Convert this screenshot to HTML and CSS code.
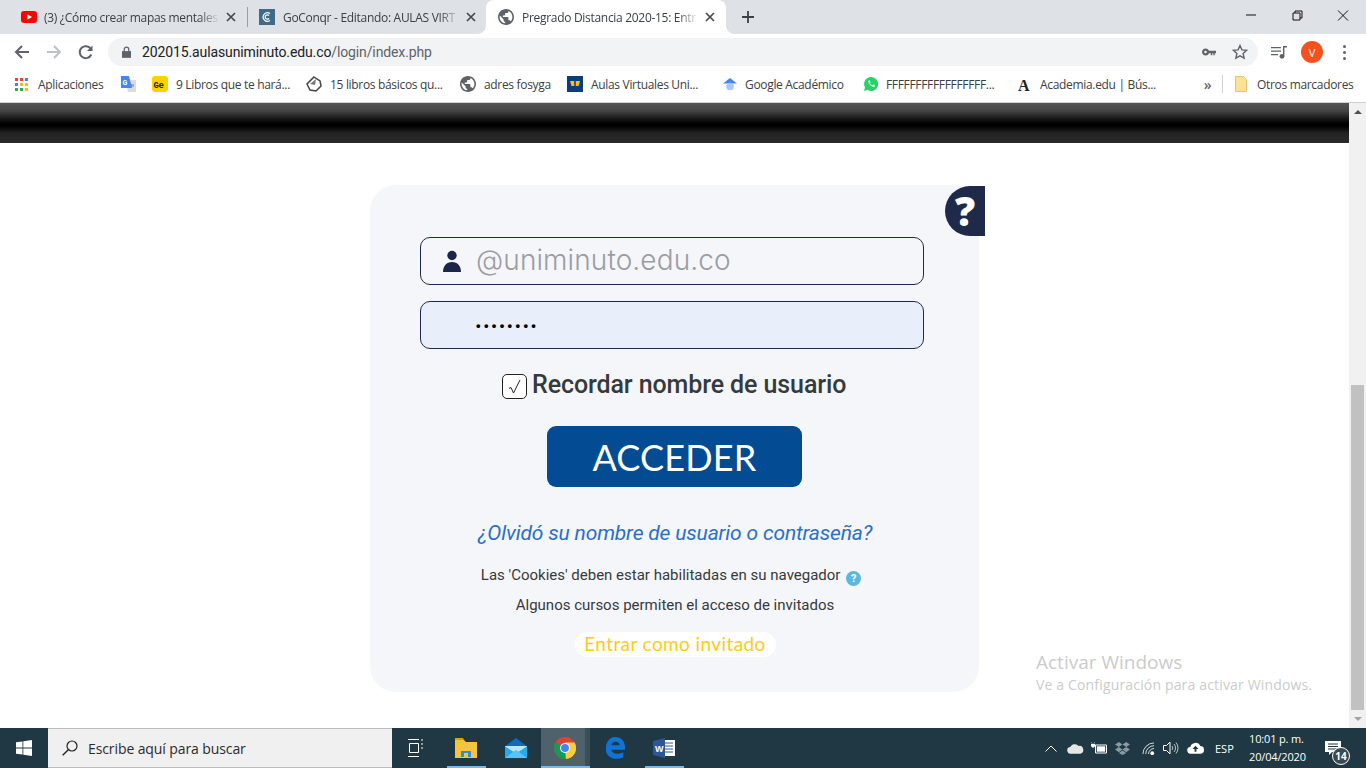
FILE: index.html
```html
<!DOCTYPE html>
<html lang="es">
<head>
<meta charset="utf-8">
<title>Pregrado Distancia 2020-15: Entrar al sitio</title>
<link rel="stylesheet" href="styles.css">
</head>
<body>
<header class="tabstrip">
  <div class="tab tab-yt">
    <svg class="fav" viewBox="0 0 16 16"><rect y="2" width="16" height="12" rx="3" fill="#f00"/><path d="M6.300 5.200v5.600L11 8z" fill="#fff"/></svg>
    <span class="tab-title">(3) ¿Cómo crear mapas mentales</span>
    <svg class="tab-x" viewBox="0 0 10 10"><path d="M1 1l8 8M9 1l-8 8"/></svg>
  </div>
  <i class="tab-sep"></i>
  <div class="tab tab-go">
    <svg class="fav" viewBox="0 0 16 16"><rect width="16" height="16" fill="#3f6b87"/><path d="M11 4.500a4.300 4.300 0 1 0 0 7M10 6.500a2.200 2.200 0 1 0 0 3" fill="none" stroke="#fff" stroke-width="1.200"/></svg>
    <span class="tab-title">GoConqr - Editando: AULAS VIRT</span>
    <svg class="tab-x" viewBox="0 0 10 10"><path d="M1 1l8 8M9 1l-8 8"/></svg>
  </div>
  <div class="tab tab-active">
    <svg class="fav" viewBox="2 2 20 20"><path fill="#5f6368" d="M12 2C6.480 2 2 6.480 2 12s4.480 10 10 10 10-4.480 10-10S17.520 2 12 2zm-1 17.930c-3.950-.490-7-3.850-7-7.930 0-.620.080-1.210.210-1.790L9 15v1c0 1.100.900 2 2 2v1.930zm6.900-2.540c-.260-.810-1-1.390-1.900-1.390h-1v-3c0-.550-.450-1-1-1H8v-2h2c.550 0 1-.450 1-1V7h2c1.100 0 2-.900 2-2v-.410c2.930 1.190 5 4.060 5 7.410 0 2.080-.800 3.970-2.100 5.390z"/></svg>
    <span class="tab-title">Pregrado Distancia 2020-15: Entr</span>
    <svg class="tab-x" viewBox="0 0 10 10"><path d="M1 1l8 8M9 1l-8 8"/></svg>
  </div>
  <svg class="new-tab" viewBox="0 0 12 12"><path d="M6 0v12M0 6h12"/></svg>
  <div class="win-controls">
    <svg viewBox="0 0 46 34"><path d="M18 15h10"/></svg>
    <svg viewBox="0 0 46 34"><path d="M19 13h7v7h-7zM21 13v-2h7v7h-2"/></svg>
    <svg viewBox="0 0 46 34"><path d="M18 10.500l10 10M28 10.500l-10 10"/></svg>
  </div>
</header>

<nav class="toolbar">
  <svg class="nav-btn" viewBox="0 0 16 16"><path d="M15 8H2M8 2L2 8l6 6" fill="none" stroke="#5f6368" stroke-width="2"/></svg>
  <svg class="nav-btn" viewBox="0 0 16 16"><path d="M1 8h13M8 2l6 6-6 6" fill="none" stroke="#bfc1c4" stroke-width="2"/></svg>
  <svg class="nav-btn" viewBox="0 0 16 16"><path d="M13.300 10.500a6 6 0 1 1-.4-5.500" fill="none" stroke="#5f6368" stroke-width="2"/><path d="M14.500 1.500v5.500H9z" fill="#5f6368"/></svg>
  <div class="omnibox">
    <svg class="lock" viewBox="0 0 10 13"><path d="M0 5.500h10V13H0z" fill="#5f6368"/><path d="M2.500 6V3.500a2.500 2.500 0 0 1 5 0V6" fill="none" stroke="#5f6368" stroke-width="1.400"/></svg>
    <span class="url"><b>202015.aulasuniminuto.edu.co</b>/login/index.php</span>
    <svg class="key" viewBox="0 0 14 8"><circle cx="3.500" cy="4" r="2.400" fill="none" stroke="#5f6368" stroke-width="2.200"/><path d="M6 2.800h8v2.400h-1.200v2h-1.500v-2h-1v2H8.800v-2H6z" fill="#5f6368"/></svg>
    <svg class="star" viewBox="0 0 16 16"><path d="M8 1.500l1.900 4.400 4.800.4-3.600 3.200 1 4.700L8 11.800l-4.100 2.400 1-4.700-3.600-3.200 4.800-.4z" fill="none" stroke="#5f6368" stroke-width="1.400"/></svg>
  </div>
  <svg class="media" viewBox="0 0 16 14"><path d="M0 2h10v1.300H0zM0 5.500h10v1.300H0zM0 9h7v1.300H0zM12 1h4v1.500h-2.600V11h-1.400z" fill="#5f6368"/><circle cx="11" cy="11.300" r="2.400" fill="#5f6368"/></svg>
  <div class="avatar">V</div>
  <div class="menu-dots"><i></i><i></i><i></i></div>
</nav>

<nav class="bookmarks">
  <div class="bm bm-apps">
    <svg class="apps" viewBox="0 0 13 13"><path fill="#ea4335" d="M0 0h3v3H0zM5 0h3v3H5z"/><path fill="#4285f4" d="M10 0h3v3h-3zM0 5h3v3H0z"/><path fill="#fbbc05" d="M5 5h3v3H5zM10 5h3v3h-3zM10 10h3v3h-3z"/><path fill="#34a853" d="M0 10h3v3H0zM5 10h3v3H5z"/></svg>
    <span>Aplicaciones</span>
  </div>
  <div class="bm bm-trans">
    <svg class="fav" viewBox="0 0 16 16"><path d="M5 4h11v12H8z" fill="#dadce0"/><path d="M1 0h8l3 12H1z" fill="#4285f4"/><text x="2.500" y="9" font-size="7" font-family="Roboto" font-weight="700" fill="#fff">G</text><path d="M11 8l1 1.500 1.500-1.500M10 10h4" stroke="#80868b" fill="none"/></svg>
  </div>
  <div class="bm bm-ge">
    <svg class="fav" viewBox="0 0 16 16"><rect width="16" height="16" rx="3" fill="#ffd000"/><text x="1.500" y="11.500" font-size="9" font-family="Liberation Mono" font-weight="700" fill="#222">Ge</text></svg>
    <span>9 Libros que te hará...</span>
  </div>
  <div class="bm bm-quince">
    <svg class="fav" viewBox="0 0 16 16"><path d="M8 1l6 4 1 5-5 5-6-1-3-6z" fill="#fff" stroke="#444" stroke-width="1.500"/><path d="M4 8l6-5-1 6z" fill="#777"/></svg>
    <span>15 libros básicos qu...</span>
  </div>
  <div class="bm bm-adres">
    <svg class="fav" viewBox="2 2 20 20"><path fill="#5f6368" d="M12 2C6.480 2 2 6.480 2 12s4.480 10 10 10 10-4.480 10-10S17.520 2 12 2zm-1 17.930c-3.950-.490-7-3.850-7-7.930 0-.620.080-1.210.210-1.790L9 15v1c0 1.100.900 2 2 2v1.930zm6.900-2.540c-.260-.810-1-1.390-1.900-1.390h-1v-3c0-.550-.450-1-1-1H8v-2h2c.550 0 1-.450 1-1V7h2c1.100 0 2-.900 2-2v-.410c2.930 1.190 5 4.060 5 7.410 0 2.080-.800 3.970-2.100 5.390z"/></svg>
    <span>adres fosyga</span>
  </div>
  <div class="bm bm-aulas">
    <svg class="fav" viewBox="0 0 16 16"><rect width="16" height="16" fill="#0a3d7c"/><path d="M3 5h10l-1.500 5h-7z" fill="#f7c500"/><path d="M8 1v14" stroke="#0a3d7c" stroke-width="1.500"/></svg>
    <span>Aulas Virtuales Uni...</span>
  </div>
  <div class="bm bm-scholar">
    <svg class="fav" viewBox="0 0 16 16"><path d="M8 2L1 7.500h14z" fill="#4285f4"/><circle cx="8" cy="10.500" r="3.800" fill="#a8c7fa"/></svg>
    <span>Google Académico</span>
  </div>
  <div class="bm bm-wa">
    <svg class="fav" viewBox="0 0 16 16"><path d="M8 1a7 7 0 0 0-6 10.500L1 15l3.600-1A7 7 0 1 0 8 1z" fill="#25d366"/><path d="M5.500 4.500l1.200-.2.8 2-.7.9c.5 1 1.300 1.800 2.400 2.300l.9-.9 1.900.9-.3 1.300c-3 .6-7-3.300-6.200-6.300z" fill="#fff"/></svg>
    <span>FFFFFFFFFFFFFFFFF...</span>
  </div>
  <div class="bm bm-acad">
    <svg class="fav" viewBox="0 0 16 16"><text x="1" y="14.500" font-size="16" font-family="Liberation Serif" font-weight="700" fill="#222">A</text></svg>
    <span>Academia.edu | Bús...</span>
  </div>
  <span class="bm-more">»</span>
  <i class="bm-sep"></i>
  <div class="bm bm-other">
    <svg class="folder" viewBox="0 0 12 16"><path d="M.5.500h8l3 3v12H.500z" fill="#fde293" stroke="#e8c468"/></svg>
    <span>Otros marcadores</span>
  </div>
</nav>

<div class="viewport">
  <main class="page">
    <div class="hero-band"></div>
    <section class="card">
      <a class="help-tab">?</a>
      <div class="field">
        <svg class="user-ico" viewBox="0 0 20 22"><circle cx="10" cy="5.500" r="4.700" fill="#1c2747"/><path d="M1 22c0-6 3.500-10 9-10s9 4 9 10z" fill="#1c2747"/></svg>
        <span class="placeholder">@uniminuto.edu.co</span>
      </div>
      <div class="field field-pass"><span class="dots">••••••••</span></div>
      <label class="remember">
        <span class="checkbox"><svg viewBox="0 0 13 15"><path d="M1 9.500l2-1 2.500 5.500L12 1" fill="none" stroke="#222" stroke-width="1"/></svg></span>
        <span class="remember-text">Recordar nombre de usuario</span>
      </label>
      <button class="submit">ACCEDER</button>
      <a class="forgot">¿Olvidó su nombre de usuario o contraseña?</a>
      <p class="note note-cookies">Las 'Cookies' deben estar habilitadas en su navegador <span class="q-ico">?</span></p>
      <p class="note note-guest">Algunos cursos permiten el acceso de invitados</p>
      <a class="guest">Entrar como invitado</a>
    </section>
    <div class="watermark">
      <div class="wm-title">Activar Windows</div>
      <div class="wm-sub">Ve a Configuración para activar Windows.</div>
    </div>
  </main>
  <div class="scrollbar">
    <i class="arrow-up"></i>
    <div class="thumb"></div>
    <i class="arrow-down"></i>
  </div>
</div>

<footer class="taskbar">
  <div class="start">
    <svg viewBox="0 0 16 16"><path fill="#fff" d="M0 2.300l6.500-.9v6.200H0zM7.300 1.300L16 0v7.600H7.300zM0 8.400h6.500v6.200L0 13.700zM7.300 8.400H16V16l-8.700-1.300z"/></svg>
  </div>
  <div class="search">
    <svg viewBox="0 0 16 16"><circle cx="10" cy="6" r="5" fill="none" stroke="#222" stroke-width="1.200"/><path d="M6.300 9.700L.7 15.300" stroke="#222" stroke-width="1.400"/></svg>
    <span>Escribe aquí para buscar</span>
  </div>
  <div class="task task-view">
    <svg viewBox="0 0 16 18"><path d="M1 .5h11M1 17.500h11M14 1h2M14 5h2M14 9h2M2.500 4.500h9v9h-9z" stroke="#fff" fill="none"/></svg>
  </div>
  <div class="task open">
    <svg viewBox="0 0 22 20"><path d="M0 2h9l2 2h11v16H0z" fill="#f8c53a"/><path d="M0 0h8l1 2H0z" fill="#d9a01e"/><path d="M6 13h10v6H6z" fill="#2d8fd5"/><path d="M9 15h4v4H9z" fill="#f8c53a"/></svg>
  </div>
  <div class="task">
    <svg viewBox="0 0 24 22"><path d="M12 0l12 9v13H0V9z" fill="#0f6cbd"/><path d="M0 9h24v13H0z" fill="#29a8ea"/><path d="M0 9l12 8 12-8v-.2H0z" fill="#bfe6fa"/><path d="M0 22l12-9 12 9z" fill="#5cc3f0"/></svg>
  </div>
  <div class="task active">
    <svg viewBox="0 0 24 24"><circle cx="12" cy="12" r="12" fill="#db4437"/><path d="M12 12L2 18a12 12 0 0 1-.5-12z" fill="#0f9d58"/><path d="M2 18a12 12 0 0 0 10 6 12 12 0 0 0 10.400-6L12 12z" fill="#0f9d58"/><path d="M12 6h10.500A12 12 0 0 1 13 24l-1-12z" fill="#ffcd40"/><circle cx="12" cy="12" r="5.400" fill="#fff"/><circle cx="12" cy="12" r="4.300" fill="#4285f4"/></svg>
  </div>
  <div class="task">
    <svg viewBox="0 0 22 24"><path d="M11 0c7 0 11 5 11 12v2H7c.5 4 6 6 13 2.500v5.500C12 26 1 23 1 13 1 6 5 0 11 0zm5 9c0-5-8-5-9 0z" fill="#0f74d6"/></svg>
  </div>
  <div class="task open">
    <svg viewBox="0 0 22 20"><path d="M8 2h14v16H8z" fill="#fff"/><path d="M10 5h10M10 8h10M10 11h10M10 14h10" stroke="#2b579a"/><path d="M0 3l12-3v20L0 17z" fill="#2b579a"/><text x="2" y="13.500" font-size="9" font-family="Liberation Sans" font-weight="700" fill="#fff">W</text></svg>
  </div>
  <div class="tray">
    <svg class="t-up" viewBox="0 0 12 7"><path d="M.5 6.500L6 1l5.500 5.500" fill="none" stroke="#fff"/></svg>
    <svg class="t-cloud" viewBox="0 0 18 11"><path d="M4 11a3.500 3.500 0 0 1-.5-7A5 5 0 0 1 12 2.800 4 4 0 0 1 14 11z" fill="#e6e6e6"/></svg>
    <svg class="t-batt" viewBox="0 0 16 12"><path d="M4.500 3h11v8h-11z" fill="none" stroke="#fff"/><path d="M6 4.500h8v5H6zM0 .5h1M3 .5h1M0 2h4v2L2.500 5.500H1.500L0 4z" fill="#fff" stroke="#fff" stroke-width=".4"/></svg>
    <svg class="t-drop" viewBox="0 0 16 14"><path d="M4 0L0 2.800l4 2.700 4-2.700zM12 0L8 2.800l4 2.700 4-2.700zM0 8.200l4 2.800 4-2.800-4-2.700zM16 8.200L12 5.500 8 8.200l4 2.800zM4 11.800L8 14l4-2.200-4-2.600z" fill="#8a9aa2"/></svg>
    <svg class="t-wifi" viewBox="0 0 14 14"><path d="M1 13A12 12 0 0 1 13 1M4 13a9 9 0 0 1 9-9M7 13a6 6 0 0 1 6-6" fill="none" stroke="#dfe5e8"/><circle cx="11" cy="12" r="2" fill="#fff"/></svg>
    <svg class="t-vol" viewBox="0 0 16 14"><path d="M.5 4.500h3L7 1v12L3.500 9.500h-3z" fill="none" stroke="#fff"/><path d="M9 5a3 3 0 0 1 0 4M11 3a6 6 0 0 1 0 8M13 1.500a8.500 8.500 0 0 1 0 11" fill="none" stroke="#b9c4c9"/></svg>
    <svg class="t-up-cloud" viewBox="0 0 18 12"><path d="M4 12a3.500 3.500 0 0 1-.5-7A5.500 5.500 0 0 1 14 4a4 4 0 0 1 0 8z" fill="#fff"/><path d="M9 3.500L5.800 7H8v3h2V7h2.200z" fill="#1f3843"/></svg>
    <span class="t-lang">ESP</span>
    <div class="t-clock"><span>10:01 p. m.</span><span>20/04/2020</span></div>
    <div class="t-notif">
      <svg viewBox="0 0 16 15"><path d="M0 0h16v11H7l-3 3v-3H0z" fill="#fff"/><path d="M3 3h10M3 5.500h10M3 8h10" stroke="#1f3843"/></svg>
      <b class="t-badge">14</b>
    </div>
  </div>
</footer>
</body>
</html>
```
FILE: styles.css
```css
* { box-sizing: border-box; }
html, body { margin: 0; height: 100%; }
body {
  width: 1366px; height: 768px; overflow: hidden;
  display: flex; flex-direction: column;
  font-family: "Open Sans", "Noto Sans", sans-serif;
  background: #fff;
}

/* tab strip */
.tabstrip { height: 34px; background: #dee1e6; display: flex; align-items: center; flex: none; }
.tab { display: flex; align-items: center; height: 34px; font-size: 12px; letter-spacing: -.3px; color: #3c4043; flex: none; }
.fav { width: 16px; height: 16px; flex: none; }
.tab-title { overflow: hidden; white-space: nowrap; flex: 1; min-width: 0;
  -webkit-mask-image: linear-gradient(90deg, #000 88%, transparent); mask-image: linear-gradient(90deg, #000 88%, transparent); }
.tab-x { width: 10px; height: 10px; flex: none; margin-left: 6px; }
.tab-x path { stroke: #45484c; stroke-width: 1.700; fill: none; }
.tab-yt { width: 247px; padding: 0 11px 0 21px; }
.tab-yt .fav { margin-right: 7px; }
.tab-sep { width: 1px; height: 20px; background: #9aa0a6; flex: none; }
.tab-go { width: 238px; padding: 0 10px 0 11px; }
.tab-go .fav { margin-right: 8px; }
.tab-active { width: 240px; padding: 0 11px 0 12px; background: #fff; border-radius: 8px 8px 0 0; position: relative; }
.tab-active .fav { margin-right: 8px; }
.tab-active::before, .tab-active::after { content: ""; position: absolute; bottom: 0; width: 8px; height: 8px; }
.tab-active::before { left: -8px; background: radial-gradient(circle at 0 0, transparent 7.500px, #fff 8px); }
.tab-active::after { right: -8px; background: radial-gradient(circle at 100% 0, transparent 7.500px, #fff 8px); }
.new-tab { width: 12px; height: 12px; margin-left: 16px; flex: none; }
.new-tab path { stroke: #3c4043; stroke-width: 1.800; fill: none; }
.win-controls { margin-left: auto; display: flex; align-self: flex-start; margin-right: 0; }
.win-controls svg { width: 46px; height: 34px; display: block; }
.win-controls path { stroke: #111; fill: none; stroke-width: 1; }

/* toolbar */
.toolbar { height: 34px; background: #fff; display: flex; align-items: center; flex: none; padding: 2px 0 0 14px; }
.nav-btn { width: 16px; height: 16px; margin-right: 16px; flex: none; }
.nav-btn:nth-of-type(3) { margin-right: 14px; }
.omnibox { width: 1150px; height: 28px; border-radius: 14px; background: #f1f3f4; display: flex; align-items: center; padding-left: 14px; flex: none; }
.lock { width: 9px; height: 12px; margin-right: 11px; flex: none; }
.url { font-family: Roboto, sans-serif; font-size: 14px; letter-spacing: -.12px; color: #5f6368; white-space: nowrap; }
.url b { font-weight: 400; color: #202124; }
.key { width: 14px; height: 8px; margin-left: auto; flex: none; }
.star { width: 16px; height: 16px; margin: 0 10px 0 16px; flex: none; }
.media { width: 16px; height: 14px; margin-left: 13px; flex: none; }
.avatar { width: 22px; height: 22px; border-radius: 50%; background: #f4511e; color: #fff; font-size: 11px; display: flex; align-items: center; justify-content: center; margin-left: 14px; flex: none; }
.menu-dots { display: flex; flex-direction: column; gap: 3px; margin-left: 20px; flex: none; }
.menu-dots i { width: 3px; height: 3px; border-radius: 50%; background: #5f6368; display: block; }

/* bookmarks */
.bookmarks { height: 35px; background: #fff; border-bottom: 1px solid #cfd0d2; display: flex; align-items: center; padding: 0 0 2px 15px; flex: none; font-size: 12px; letter-spacing: -.32px; color: #3c4043; }
.bm { display: flex; align-items: center; gap: 8px; white-space: nowrap; flex: none; }
.bm-apps { width: 105px; gap: 10px; }
.apps { width: 13px; height: 13px; flex: none; }
.bm-trans { width: 32px; }
.bm-ge { width: 154px; }
.bm-quince { width: 154px; }
.bm-adres { width: 107px; }
.bm-aulas { width: 155px; gap: 8px; }
.bm-scholar { width: 141px; gap: 7px; }
.bm-wa { width: 154px; gap: 7px; }
.bm-acad { width: 183px; gap: 7px; }
.bm-more { width: 15px; font-size: 14px; color: #5f6368; font-weight: 600; flex: none; text-align: center; }
.bm-sep { width: 1px; height: 18px; background: #cfd0d2; margin: 0 12px 0 7px; flex: none; }
.bm-other { gap: 10px; }
.folder { width: 12px; height: 16px; flex: none; }

/* page */
.viewport { height: 625px; display: flex; flex: none; position: relative; }
.page { flex: 1; min-width: 0; background: #fff; display: flex; flex-direction: column; align-items: center; position: relative; overflow: hidden; }
.hero-band { align-self: stretch; height: 40px; flex: none;
  background: linear-gradient(180deg, #555 0%, #444 20%, #111 42%, #000 52%, #000 58%, #222 75%, #2a2a2a 100%); }
.card { position: relative; width: 609px; height: 507px; margin-top: 42px; border-radius: 26px; background: #f5f6fa;
  display: flex; flex-direction: column; padding: 52px 0 0 50px; font-family: Roboto, sans-serif; }
.help-tab { position: absolute; left: 575px; top: 1px; width: 40px; height: 50px; background: #1f2a4a; border-radius: 25px 0 0 25px; color: #fff; font: 800 40px/50px "Open Sans", sans-serif; text-align: center; }
.field { width: 504px; height: 48px; border: 1px solid #1f2a4a; border-radius: 10px; display: flex; align-items: center; padding-left: 21px; flex: none; }
.field-pass { margin-top: 16px; background: #e8effb; padding-left: 55px; }
.user-ico { width: 20px; height: 22px; flex: none; margin-right: 14px; }
.placeholder { font: 300 28px "Inter", "Open Sans", sans-serif; color: #9c9ca3; letter-spacing: .1px; padding-bottom: 3px; }
.dots { font: 700 13px "Liberation Sans", sans-serif; letter-spacing: 3.350px; color: #000; }
.remember { display: flex; align-items: center; gap: 5px; margin: 25px 0 0 82px; font-size: 25px; font-weight: 500; letter-spacing: -.1px; color: #373a3c; height: 25px; white-space: nowrap; }
.remember-text { padding-bottom: 4px; }
.checkbox { width: 25px; height: 25px; border: 1px solid #222; border-radius: 5px; background: #fff; display: flex; align-items: center; justify-content: center; flex: none; }
.checkbox svg { width: 13px; height: 15px; }
.submit { width: 255px; height: 61px; margin: 27px 0 0 127px; flex: none; border: 0; border-radius: 9px; background: #034c93; color: #fff; font: 400 36px Lato, sans-serif; letter-spacing: .2px; padding: 0; }
.forgot { align-self: center; margin: 34px 0 0 -49px; font-size: 21px; letter-spacing: -.17px; font-style: italic; color: #2a6fc9; line-height: 24px; white-space: nowrap; }
.note { margin: 0; font-size: 15px; color: #373a3c; line-height: 20px; align-self: center; white-space: nowrap; margin-left: -49px; }
.note-cookies { margin-top: 20px; margin-left: -57px; }
.note-guest { margin-top: 9px; }
.q-ico { display: inline-block; width: 15px; height: 15px; border-radius: 50%; background: #5bb7dd; color: #fff; font-size: 11px; font-weight: 700; line-height: 15px; text-align: center; margin-left: 2px; vertical-align: -2px; }
.guest { align-self: center; margin: 17px 0 0 -49px; width: 201px; height: 25px; border-radius: 13px; background: #fff; color: #ffcb14; font: 400 19px/24px Lato, sans-serif; text-align: center; letter-spacing: .4px; }
.watermark { position: absolute; left: 1036px; top: 547px; color: #cbcbcb; white-space: nowrap; }
.wm-title { font-size: 19px; line-height: 24px; }
.wm-sub { font-size: 14px; line-height: 22px; letter-spacing: .16px; }

/* scrollbar */
.scrollbar { width: 17px; flex: none; background: #f1f1f1; display: flex; flex-direction: column; align-items: center; padding: 7px 0 7px; }
.arrow-up, .arrow-down { width: 0; height: 0; border-left: 4px solid transparent; border-right: 4px solid transparent; display: block; flex: none; }
.arrow-up { border-bottom: 4px solid #505050; }
.arrow-down { border-top: 4px solid #a3a3a3; }
.thumb { width: 13px; height: 325px; background: #c1c1c1; margin-top: auto; margin-bottom: 7px; }

/* taskbar */
.taskbar { height: 40px; background: #1f3843; display: flex; align-items: stretch; flex: none; color: #fff; }
.start { width: 48px; display: flex; align-items: center; justify-content: center; flex: none; }
.start svg { width: 16px; height: 16px; }
.search { width: 344px; background: #f0f0f0; border: 1px solid #b9bcbe; border-width: 1px 0; display: flex; align-items: center; padding-left: 14px; gap: 10px; font-size: 14px; letter-spacing: -.1px; color: #2b2b2b; flex: none; }
.search svg { width: 16px; height: 16px; flex: none; }
.task { width: 49.500px; display: flex; align-items: center; justify-content: center; position: relative; flex: none; }
.task svg { width: 22px; height: 22px; }
.task-view { padding-right: 3px; }
.task-view svg { width: 16px; height: 18px; }
.task.open::after, .task.active::after { content: ""; position: absolute; left: 5px; right: 5px; bottom: 0; height: 2px; background: #76b9ed; }
.task.active::after { left: 0; right: 0; }
.task.active { background: linear-gradient(90deg, #4f616a 0, #4f616a 44px, #3b4d56 44px); }
.tray { margin-left: auto; display: flex; align-items: center; position: relative; flex: none; }
.tray svg { flex: none; }
.t-up { width: 12px; height: 7px; margin-right: 10px; }
.t-cloud { width: 17px; height: 11px; margin-right: 7px; }
.t-batt { width: 16px; height: 12px; margin-right: 8px; }
.t-drop { width: 15px; height: 13px; margin-right: 12px; }
.t-wifi { width: 13px; height: 13px; margin-right: 8px; }
.t-vol { width: 16px; height: 14px; margin-right: 8px; }
.t-up-cloud { width: 17px; height: 12px; margin-right: 11px; }
.t-lang { font-size: 11px; width: 20px; margin-right: 14px; }
.t-clock { display: flex; flex-direction: column; font-size: 11px; line-height: 18px; letter-spacing: -.15px; width: 62px; }
.t-notif { width: 55px; position: relative; height: 40px; display: flex; align-items: center; justify-content: center; padding-right: 11px; }
.t-notif svg { width: 16px; height: 15px; }
.t-badge { position: absolute; left: 21px; top: 19px; width: 18px; height: 18px; border-radius: 50%; background: #3a4a52; border: 1px solid #fff; font: 700 10px/16px "Open Sans", sans-serif; text-align: center; }
```
